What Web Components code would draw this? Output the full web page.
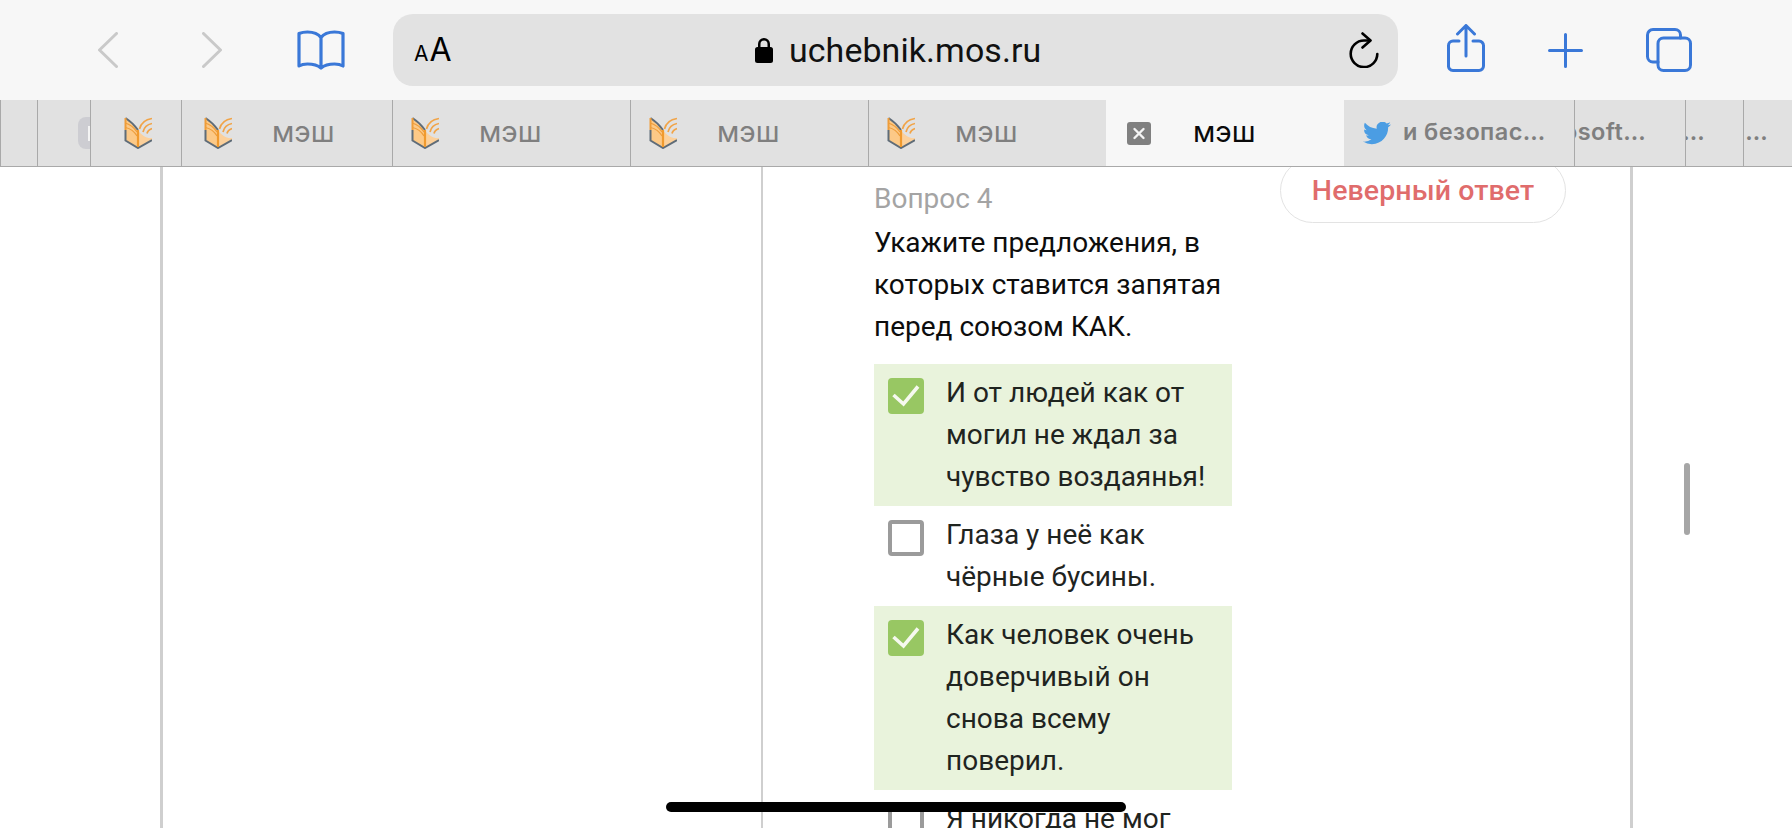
<!DOCTYPE html>
<html lang="ru"><head><meta charset="utf-8"><title>МЭШ</title>
<style>
html,body{margin:0;padding:0;width:1792px;height:828px;overflow:hidden;background:#fff}
safari-app{font-family:Roboto,"Liberation Sans",sans-serif}
</style></head><body>
<safari-app>
  <safari-toolbar slot="toolbar"></safari-toolbar>
  <tab-strip slot="tabs">
    <tab-item w="37"></tab-item>
    <tab-item w="53" icon="stub" pad="40"></tab-item>
    <tab-item w="91" icon="book" pad="33"></tab-item>
    <tab-item w="211" icon="book" pad="22" gap="40" label="мэш"></tab-item>
    <tab-item w="238" icon="book" pad="18" gap="40" label="мэш"></tab-item>
    <tab-item w="238" icon="book" pad="18" gap="40" label="мэш"></tab-item>
    <tab-item w="238" icon="book" pad="18" gap="40" label="мэш"></tab-item>
    <tab-item w="238" icon="close" pad="21" gap="42" label="мэш" active></tab-item>
    <tab-item w="230" icon="bird" pad="19" gap="12" label="и безопас…" wide noline></tab-item>
    <tab-item w="111" label="Microsoft…" end="39" wide></tab-item>
    <tab-item w="58" label="…" end="38" wide></tab-item>
    <tab-item w="49" label="…" end="24" wide></tab-item>
  </tab-strip>
  <lesson-page slot="page">
    <result-badge>Неверный ответ</result-badge>
    <quiz-question num="Вопрос 4" text="Укажите предложения, в которых ставится запятая перед союзом КАК.">
      <quiz-option checked>И от людей как от могил не ждал за чувство воздаянья!</quiz-option>
      <quiz-option>Глаза у неё как чёрные бусины.</quiz-option>
      <quiz-option checked>Как человек очень доверчивый он снова всему поверил.</quiz-option>
      <quiz-option>Я никогда не мог понять этого.</quiz-option>
    </quiz-question>
  </lesson-page>
  <home-indicator slot="over"></home-indicator>
</safari-app>
<script>
function el(name, css, html, init){
  customElements.define(name, class extends HTMLElement{
    connectedCallback(){
      if(this.shadowRoot) return;
      const r=this.attachShadow({mode:'open'});
      r.innerHTML='<style>'+css+'</style>'+(typeof html==='function'?html(this):html);
      if(init) init(this,r);
    }
  });
}
el('safari-app',`:host{display:flex;flex-direction:column;width:1792px;height:828px;position:relative;overflow:hidden;background:#fff}`,
`<slot name="toolbar"></slot><slot name="tabs"></slot><slot name="page"></slot><slot name="over"></slot>`);

const BLUE='#3a78d8';
el('safari-toolbar',`
:host{display:flex;align-items:flex-start;height:100px;background:#f7f7f7;flex:none;color:${BLUE};position:relative}
svg{display:block;flex:none;fill:none;stroke:currentColor;stroke-linecap:round;stroke-linejoin:round}
.url{position:relative;display:flex;align-items:center;margin:14px 0 0 48px;width:1005px;height:72px;border-radius:20px;background:#e2e2e2;color:#000;flex:none}
.aa{display:flex;align-items:baseline;margin-left:21px;font-family:"Inter","Liberation Sans",sans-serif;line-height:1;color:#000}
.aa b{font-weight:400;font-size:21px}.aa i{font-style:normal;font-weight:400;font-size:32px;margin-left:1px}
.addr{display:flex;align-items:center;position:absolute;left:362px;top:0;height:72px;gap:16px}
.addr span{font:400 33.9px Roboto,sans-serif;letter-spacing:.1px;color:#111}
.reload{position:absolute;left:956px;top:18px;color:#000}
`,
`<svg style="margin:32px 0 0 98px" width="20" height="36" viewBox="0 0 20 36" stroke-width="3" color="#c9c9c9"><path d="M18.5 1.5 1.5 18l17 16.5"/></svg>
<svg style="margin:32px 0 0 84px" width="20" height="36" viewBox="0 0 20 36" stroke-width="3" color="#c9c9c9"><path d="M1.5 1.5 18.5 18l-17 16.5"/></svg>
<svg style="margin:30px 0 0 75px" width="48" height="40" viewBox="0 0 48 40" stroke-width="3.200"><path d="M24 7.5C21 3.500 16 2 10.500 2 7 2 4.500 2.500 2 3.500V36c2.500-1.500 5.500-2 8.500-2 5.500 0 10.500 1.500 13.500 4 3-2.500 8-4 13.500-4 3 0 6 .5 8.500 2V3.500C43.500 2.500 41 2 37.500 2 32 2 27 3.500 24 7.500Zm0 0v30"/></svg>
<div class="url">
  <div class="aa"><b>A</b><i>A</i></div>
  <div class="addr">
    <svg width="18" height="26" viewBox="0 0 18 26" style="stroke:none;fill:#000"><path d="M3 10V7a6 6 0 0 1 12 0v3h-2.500V7a3.500 3.500 0 0 0-7 0v3Z"/><rect y="10" width="18" height="16" rx="2.500"/></svg>
    <span>uchebnik.mos.ru</span>
  </div>
  <svg class="reload" width="30" height="36" viewBox="0 0 30 36" stroke-width="2.600"><path d="M21 8.500H15A13.300 13.300 0 1 0 28.300 22"/><path d="M13.500 1.500 21.500 8.500 13.500 15.500"/></svg>
</div>
<svg style="margin:24px 0 0 49px" width="38" height="48" viewBox="0 0 38 48" stroke-width="3"><path d="M12 17H6a4.500 4.500 0 0 0-4.500 4.500v20A4.500 4.500 0 0 0 6 46.500h26a4.500 4.500 0 0 0 4.500-4.500v-20.500A4.500 4.500 0 0 0 32 17h-6"/><path d="M19 32V2M10.500 10 19 1.500 27.500 10"/></svg>
<svg style="margin:33px 0 0 63px" width="35" height="35" viewBox="0 0 35 35" stroke-width="3"><path d="M17.500 1.500v32M1.500 17.500h32"/></svg>
<svg style="margin:28px 0 0 63px" width="46" height="44" viewBox="0 0 46 44" stroke-width="3"><path d="M12 34H7a5.500 5.500 0 0 1-5.500-5.500V7A5.500 5.500 0 0 1 7 1.500h22A5.500 5.500 0 0 1 34.500 7v3"/><rect x="12" y="10" width="32.500" height="32.500" rx="5.500"/></svg>`);

const ICONS={
 book:`<svg width="28" height="32" viewBox="0 0 28 32" style="display:block;flex:none"><path d="M1.500 1 14 13v18L1.500 23.500Z" fill="#fcc987"/><path d="M14 13c3 5 9 9 14 8v2.500L14 31Z" fill="#fcd09a"/><path d="M1.500 6C6 7.500 10 10.500 13 15M1.500 10.500C6 11.500 10 14 13 19" fill="none" stroke="#ee9d3a" stroke-width="1.200"/><path d="M1.500 1C6 4 10.500 8 14 13" fill="none" stroke="#5f6c78" stroke-width="1.800"/><path d="M1.500 13V23.500L14 31 28 23" fill="none" stroke="#5f6c78" stroke-width="2"/><path d="M1.500 1V13" stroke="#ee9d3a" stroke-width="2"/><path d="M14 13v17" stroke="#f09a2e" stroke-width="2.200"/><g fill="none" stroke="#f1a448" stroke-width="1.700"><path d="M15.500 12C17 6 21 2.500 28 1.500"/><path d="M19 15C20 10.500 23 7.500 28 6.500"/><path d="M23 16.500C23.500 14 25 12.500 28 11.500"/></g></svg>`,
 stub:`<div style="width:20px;height:32px;border-radius:8px;background:#cdcdd2;position:relative;flex:none"><div style="position:absolute;left:10px;top:9px;width:3px;height:15px;background:#f4f4f4"></div></div>`,
 close:`<svg width="24" height="23" viewBox="0 0 24 23" style="display:block;flex:none"><rect width="24" height="23" rx="3" fill="#808080"/><path d="M7.500 7l9 9M16.500 7l-9 9" stroke="#f4f4f4" stroke-width="2.400" stroke-linecap="round"/></svg>`,
 bird:`<svg width="28" height="23" viewBox="0 0 24 20" preserveAspectRatio="none" style="display:block;flex:none"><path transform="translate(0 -2.500)" fill="#4b9de3" d="M23.953 4.570a10 10 0 0 1-2.825.775 4.958 4.958 0 0 0 2.163-2.723c-.951.555-2.005.959-3.127 1.184a4.920 4.920 0 0 0-8.384 4.482C7.690 8.095 4.067 6.130 1.640 3.162a4.822 4.822 0 0 0-.666 2.475c0 1.710.870 3.213 2.188 4.096a4.904 4.904 0 0 1-2.228-.616v.060a4.923 4.923 0 0 0 3.946 4.827 4.996 4.996 0 0 1-2.212.085 4.936 4.936 0 0 0 4.604 3.417 9.867 9.867 0 0 1-6.102 2.105c-.390 0-.779-.023-1.170-.067a13.995 13.995 0 0 0 7.557 2.209c9.053 0 13.998-7.496 13.998-13.985 0-.210 0-.420-.015-.630A9.935 9.935 0 0 0 24 4.590z"/></svg>`
};
el('tab-strip',`:host{display:flex;height:67px;flex:none;background:#e1e1e1;position:relative;z-index:2;box-sizing:border-box}`,`<slot></slot>`);
el('tab-item',`
:host{display:flex;align-items:center;box-sizing:border-box;height:67px;overflow:hidden;flex:none;background:#e1e1e1;border-left:1px solid #a9a9a9;border-bottom:1px solid #a9a9a9;color:#7f7f7f;white-space:nowrap;font-family:Inter,"Liberation Sans",sans-serif;font-size:29px;font-weight:400}
:host([active]){background:#f7f7f7;color:#0a0a0a;border-left:0}
:host([noline]){border-left:0}
:host([wide]){font-size:23.500px;font-weight:600;letter-spacing:.4px}
.l{padding-bottom:3px}
`,t=>{
  const i=t.getAttribute('icon'),lab=t.getAttribute('label');
  t.style.width=t.getAttribute('w')+'px';
  const end=t.getAttribute('end');
  if(end!==null){t.style.justifyContent='flex-end';t.style.paddingRight=end+'px';}
  else t.style.paddingLeft=(t.getAttribute('pad')||0)+'px';
  return (i?ICONS[i]:'')+(lab?`<span class="l" style="margin-left:${i?(t.getAttribute('gap')||0):0}px">${lab}</span>`:'');
});
el('lesson-page',`
:host{display:block;flex:1;overflow:hidden;position:relative;min-height:0;background:#fff}
.frame{display:flex;height:100%;margin-left:160px;width:1473px;box-sizing:border-box;border:solid #cfcfcf;border-width:0 3px}
.side{width:598px;flex:none;border-right:2px solid #cfcfcf;box-sizing:content-box}
.main{flex:1;min-width:0;padding-left:111px;display:flex;align-items:flex-start;gap:48px}
::slotted(quiz-question){order:1}::slotted(result-badge){order:2}
.bar{position:absolute;left:1684px;top:296px;width:6px;height:72px;border-radius:3px;background:#a6a6a6}
`,`<div class="frame"><div class="side"></div><div class="main"><slot></slot></div></div><div class="bar"></div>`);
el('result-badge',`
:host{display:flex;align-items:center;justify-content:center;box-sizing:border-box;width:286px;height:65px;margin-top:-9px;padding-top:2px;flex:none;border:1px solid #e3e3e3;border-radius:33px;color:#e06c6c;background:#fff;font:500 28.500px/1 Roboto,sans-serif;letter-spacing:.1px}
`,`<slot></slot>`);
el('quiz-question',`
:host{display:block;width:358px;flex:none;font-family:Roboto,sans-serif}
.n{color:#a4a4a4;font-size:28px;line-height:42px;margin:11px 0 0 0}
.t{color:#0d0d0d;font-size:28px;line-height:42px;margin:2px 0 16px 0}
`,t=>`<div class="n">${t.getAttribute('num')}</div><div class="t">${t.getAttribute('text')}</div><slot></slot>`);
el('quiz-option',`
:host{display:flex;box-sizing:border-box;padding:8px 20px 8px 14px;gap:22px;color:#1f241f;font:400 28px/42px Roboto,sans-serif;background:transparent}
:host([checked]){background:#e9f3dc}
.c{box-sizing:border-box;width:36px;height:36px;margin-top:6px;flex:none;border-radius:4px;border:4px solid #9b9b9b;background:#fff}
:host([checked]) .c{background:#98c763;border:0}
svg{display:none}
:host([checked]) svg{display:block}
`,`<div class="c"><svg width="36" height="36" viewBox="0 0 36 36"><path d="M5.500 17 15.500 26 30 8.500" fill="none" stroke="#f6f9ef" stroke-width="3.600"/></svg></div><div><slot></slot></div>`);
el('home-indicator',`:host{position:absolute;left:666px;top:802px;width:460px;height:10px;border-radius:5px;background:#000;z-index:3}`,``);
</script>
</body></html>
